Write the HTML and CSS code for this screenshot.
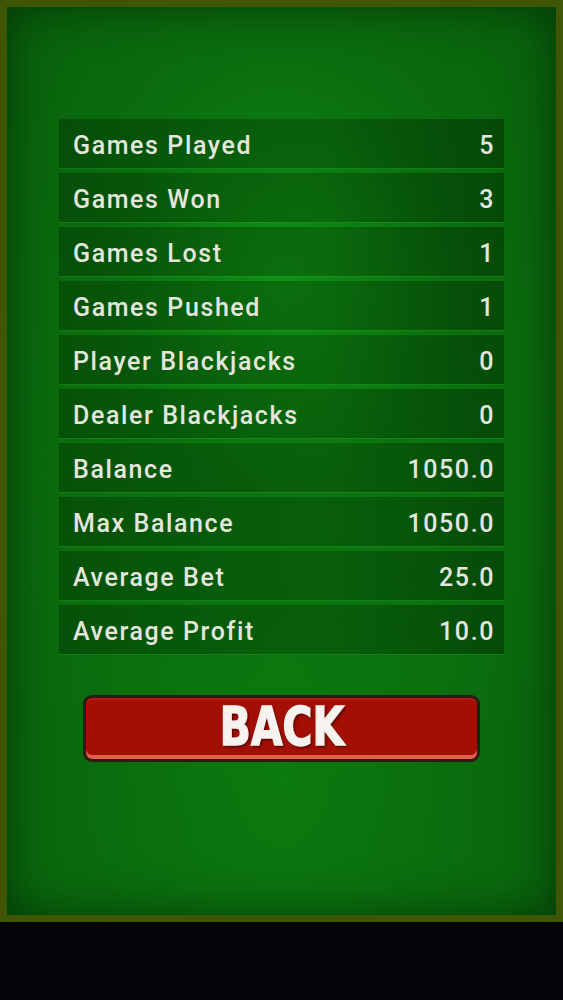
FILE: index.html
```html
<!DOCTYPE html>
<html>
<head>
<meta charset="utf-8">
<link rel="stylesheet" href="styles.css">
</head>
<body>
<div class="frame">
  <div class="stats">
    <div class="row"><span>Games Played</span><span>5</span></div>
    <div class="row"><span>Games Won</span><span>3</span></div>
    <div class="row"><span>Games Lost</span><span>1</span></div>
    <div class="row"><span>Games Pushed</span><span>1</span></div>
    <div class="row"><span>Player Blackjacks</span><span>0</span></div>
    <div class="row"><span>Dealer Blackjacks</span><span>0</span></div>
    <div class="row"><span>Balance</span><span>1050.0</span></div>
    <div class="row"><span>Max Balance</span><span>1050.0</span></div>
    <div class="row"><span>Average Bet</span><span>25.0</span></div>
    <div class="row"><span>Average Profit</span><span>10.0</span></div>
  </div>
  <button class="back"><span class="back-label">BACK</span></button>
</div>
</body>
</html>
```

FILE: styles.css
```css
html, body {
  margin: 0;
  padding: 0;
  background: #030308;
}

.frame {
  box-sizing: border-box;
  width: 563px;
  height: 922px;
  border: 7px solid #3e5606;
  background:
    radial-gradient(ellipse 75% 60% at 50% 30%, rgba(16,145,20,0.95) 0%, rgba(12,125,16,0.6) 40%, rgba(8,100,12,0) 100%),
    radial-gradient(ellipse 80% 70% at 50% 85%, rgba(12,128,16,0.85) 0%, rgba(10,110,14,0) 100%),
    #08590b;
  box-shadow: inset 0 0 45px rgba(0, 30, 0, 0.6);
  display: flex;
  flex-direction: column;
  align-items: center;
  overflow: hidden;
}

.stats {
  margin-top: 112px;
  width: 445px;
  display: flex;
  flex-direction: column;
  gap: 5px;
}

.row {
  box-sizing: border-box;
  height: 49px;
  display: flex;
  justify-content: space-between;
  align-items: center;
  padding: 4px 9px 0 14px;
  background: linear-gradient(90deg, rgba(0, 40, 0, 0.4) 0%, rgba(0, 40, 0, 0.3) 60%, rgba(0, 30, 0, 0.42) 100%);
  box-shadow: 0 1px 0 rgba(60, 200, 60, 0.18);
  font-family: Roboto, "Noto Sans", sans-serif;
  font-weight: 500;
  font-size: 25px;
  letter-spacing: 1.6px;
  color: #e4e6de;
}

.back {
  margin-top: 41px;
  box-sizing: border-box;
  width: 397px;
  height: 67px;
  border: 3px solid #2b1d12;
  border-radius: 9px;
  background: #a30f05;
  box-shadow: inset 0 -4px 0 #e5604a, inset 0 2px 0 rgba(200, 40, 20, 0.5);
  padding: 0 0 4px 0;
  display: flex;
  align-items: center;
  justify-content: center;
  cursor: pointer;
}

.back-label {
  display: inline-block;
  font-family: "DejaVu Sans Condensed", "DejaVu Sans", sans-serif;
  font-stretch: condensed;
  font-weight: bold;
  font-size: 54px;
  line-height: 1;
  color: #f6f2ee;
  -webkit-text-stroke: 1.5px #f6f2ee;
  transform: scaleX(0.84);
  text-shadow: 2px 2px 3px rgba(60, 0, 0, 0.85);
}
```
